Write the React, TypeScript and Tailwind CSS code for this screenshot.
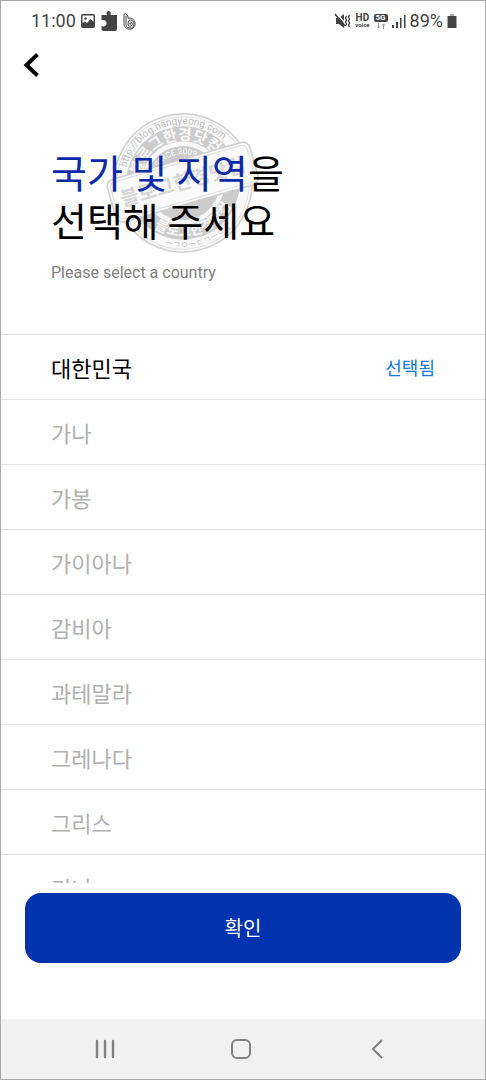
import React from "react";

const countries = [
  "대한민국",
  "가나",
  "가봉",
  "가이아나",
  "감비아",
  "과테말라",
  "그레나다",
  "그리스",
  "기니",
];

// 제목 뒤에 깔리는 원형 도장
function Stamp() {
  return (
    <svg
      viewBox="0 0 160 144"
      className="pointer-events-none absolute -top-9 left-[102px] h-36 w-40"
      fontFamily="'Noto Sans CJK KR', sans-serif"
      aria-hidden="true"
    >
      <defs>
        <path id="ring-url" d="M21 72 A59 59 0 0 1 139 72" />
        <path id="ring-top" d="M37 72 A43 43 0 0 1 123 72" />
        <path id="ring-bottom" d="M27 72 A53 53 0 0 0 133 72" />
        <path id="ring-small" d="M15 72 A65 65 0 0 0 145 72" />
        <path id="ring-since" d="M51 72 A29 29 0 0 1 109 72" />
      </defs>
      <g opacity="0.55" transform="rotate(-16 80 72)">
        <circle cx="80" cy="72" r="69" fill="#f4f4f4" stroke="#a8a8a8" strokeWidth="1.500" />
        <circle cx="80" cy="72" r="66" fill="none" stroke="#cccccc" strokeWidth="1" />
        <circle cx="80" cy="72" r="49" fill="none" stroke="#a4a4a4" strokeWidth="15" />
        <circle cx="80" cy="72" r="38" fill="#a4a4a4" stroke="#f4f4f4" strokeWidth="2" />
        <text fontSize="10" fill="#8c8c8c" fontFamily="Roboto, sans-serif">
          <textPath href="#ring-url" startOffset="50%" textAnchor="middle">
            http://blog.hangyeong.com
          </textPath>
        </text>
        <text fontSize="15" fontWeight="700" fill="#f4f4f4">
          <textPath href="#ring-top" startOffset="50%" textAnchor="middle">
            블로그한경닷컴
          </textPath>
        </text>
        <text fontSize="8" fill="#ffffff" fontFamily="Roboto, sans-serif">
          <textPath href="#ring-since" startOffset="50%" textAnchor="middle">
            SINCE 2009
          </textPath>
        </text>
        <text fontSize="14" fontWeight="700" fill="#f4f4f4">
          <textPath href="#ring-bottom" startOffset="50%" textAnchor="middle">
            블로그한경닷컴
          </textPath>
        </text>
        <text fontSize="9" fill="#999999">
          <textPath href="#ring-small" startOffset="50%" textAnchor="middle">
            ㅡㄱㅇㅡㄷㄱㅡㅇㅣ
          </textPath>
        </text>
        <rect x="6" y="49" width="148" height="44" rx="7" fill="#f6f6f6" stroke="#a8a8a8" strokeWidth="1.500" />
        <rect x="9" y="52" width="142" height="38" rx="5" fill="#f6f6f6" stroke="#c4c4c4" strokeWidth="1" />
        <text x="80" y="78" fontSize="20" fontWeight="700" fill="#b8b8b8" textAnchor="middle">
          블로그한경닷컴
        </text>
      </g>
    </svg>
  );
}

function StatusBar() {
  return (
    <div className="flex h-10 shrink-0 items-center justify-between pr-7 pl-[30px] font-[Roboto,sans-serif] text-lg text-[#444444]">
      <div className="flex items-center gap-[5px]">
        <span>11:00</span>
        <svg viewBox="0 0 14 14" className="size-[14px]" aria-hidden="true">
          <rect x="0.750" y="0.750" width="12.500" height="12.500" rx="1" fill="none" stroke="#444444" strokeWidth="1.500" />
          <circle cx="4.500" cy="4.500" r="1.200" fill="#444444" />
          <path d="M1 11V9.500l3-2 2 1.500 3.500-4L13 8v5H1z" fill="#444444" />
        </svg>
        <svg viewBox="0 0 18 20" className="h-5 w-[18px]" fill="#444444" aria-hidden="true">
          <path d="M2 4h5c-.8-1.200-.4-4 1.700-4s2.500 2.800 1.700 4H17v13.500q0 2.500-2 2.500H4q-2.500 0-2.500-2.500v-2.500c1.800 1 5 .5 5-2.700S3.300 8.500 1.500 9.500V4z" />
        </svg>
        <svg viewBox="0 0 14 17" className="h-[17px] w-[14px]" fill="none" stroke="#444444" strokeWidth="1" aria-hidden="true">
          <path d="M1 10V2Q1 .7 2.200.7 5 1.500 5 4v1.300A5.600 5.600 0 1 1 1 10" />
          <path d="M3 2.500V10.500A4 4 0 1 0 7.500 7Q5 7 5 10.500A2.200 2.200 0 1 0 7.500 8.800" />
          <circle cx="7.200" cy="10.700" r="0.600" />
        </svg>
      </div>
      <div className="flex items-center gap-1">
        <svg viewBox="0 0 16 16" className="size-4" aria-hidden="true">
          <path d="M1 5h3l5-4v14l-5-4H1z" fill="#444444" />
          <path d="M1.500 0l10 12" stroke="#ffffff" strokeWidth="1.500" />
          <path d="M0 1l10 12" fill="none" stroke="#444444" strokeWidth="1.500" />
          <path d="M11.500 3l-1 2 1 2-1 2 1 2-1 2M14.500 2l-1 2 1 2-1 2 1 2-1 2 1 2" fill="none" stroke="#444444" strokeWidth="1.300" />
        </svg>
        <div className="flex flex-col items-center font-bold">
          <span className="text-[10px] leading-[8px]">HD</span>
          <span className="text-[6px] leading-[6px]">voice</span>
        </div>
        <div className="flex flex-col items-center gap-px">
          <span className="rounded-xs bg-[#444444] px-[2px] text-[8px] leading-[8px] font-bold text-white">5G</span>
          <svg viewBox="0 0 10 6" className="h-[6px] w-[10px]" fill="none" stroke="#999999" aria-hidden="true">
            <path d="M2.500 0v5M1 3.500L2.500 5 4 3.500M7.500 6V1M6 2.500L7.500 1 9 2.500" />
          </svg>
        </div>
        <svg viewBox="0 0 14 14" className="size-[14px]" fill="#444444" aria-hidden="true">
          <path d="M0 11h2v3H0zM4 8h2v6H4zM8 4h1.500v10H8zM12 1h1.500v13H12z" />
        </svg>
        <span>89%</span>
        <svg viewBox="0 0 10 14" className="h-[14px] w-[10px]" aria-hidden="true">
          <path d="M3 0h4v2H3z" fill="#aaaaaa" />
          <path d="M.5 2h9v12h-9z" fill="#444444" />
        </svg>
      </div>
    </div>
  );
}

export default function App() {
  return (
    <div className="flex h-screen flex-col border border-[#a9a9a9] bg-white font-['Noto_Sans_CJK_KR',sans-serif]">
      <StatusBar />

      <header className="px-[22px] pt-3">
        <button type="button" aria-label="뒤로" className="block">
          <svg viewBox="0 0 18 24" className="h-6 w-[18px]" fill="none" stroke="#000000" strokeWidth="4" aria-hidden="true">
            <path d="M14.500 1.500L3.500 12l11 10.500" />
          </svg>
        </button>
      </header>

      <section className="relative mt-[70px] px-[50px]">
        <Stamp />
        <h1 className="relative text-[39px] leading-[48px] text-black">
          <span className="text-[#0a2ba8]">국가 및 지역</span>을
          <br />
          선택해 주세요
        </h1>
        <p className="relative mt-[18px] font-[Roboto,sans-serif] text-base text-[#808080]">
          Please select a country
        </p>
      </section>

      <ul className="mt-[49px] min-h-0 flex-1 overflow-hidden border-t border-[#e2e2e2]">
        {countries.map((name, i) => (
          <li key={name} className="border-b border-[#e2e2e2]">
            <button
              type="button"
              className="flex h-16 w-full items-center justify-between px-[50px] text-left"
            >
              <span className={i === 0 ? "text-[22px] text-black" : "text-[22px] text-[#b0b0b0]"}>
                {name}
              </span>
              {i === 0 && <span className="text-lg text-[#0a78e6]">선택됨</span>}
            </button>
          </li>
        ))}
      </ul>

      <div className="px-6 pt-[10px] pb-14">
        <button
          type="button"
          className="h-[70px] w-full rounded-2xl bg-[#0033ad] text-[20px] text-white"
        >
          확인
        </button>
      </div>

      <nav className="flex h-[60px] shrink-0 items-center justify-around bg-[#f1f1f1] pr-10 pl-9 text-[#808080]">
        <button type="button" aria-label="최근 앱">
          <svg viewBox="0 0 20 20" className="size-5" stroke="currentColor" strokeWidth="2.400" strokeLinecap="round" aria-hidden="true">
            <path d="M2 2v16M10 2v16M18 2v16" />
          </svg>
        </button>
        <button type="button" aria-label="홈">
          <svg viewBox="0 0 22 22" className="size-[22px]" fill="none" stroke="currentColor" strokeWidth="2" aria-hidden="true">
            <rect x="2" y="2" width="18" height="18" rx="5" />
          </svg>
        </button>
        <button type="button" aria-label="이전">
          <svg viewBox="0 0 20 20" className="size-5" fill="none" stroke="currentColor" strokeWidth="2" aria-hidden="true">
            <path d="M15 1L6 10l9 9" />
          </svg>
        </button>
      </nav>
    </div>
  );
}
